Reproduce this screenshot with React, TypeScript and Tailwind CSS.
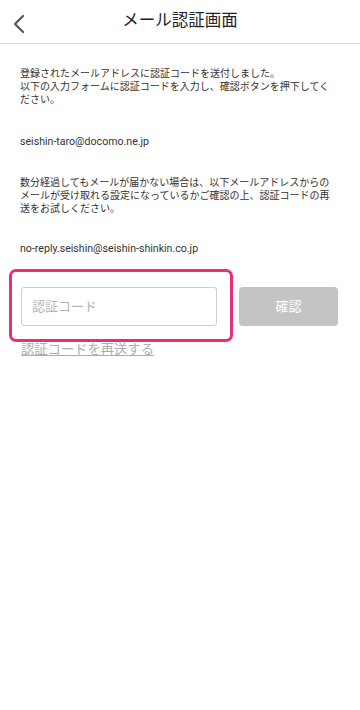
export default function App() {
  return (
    <div
      className="w-full min-h-screen bg-white text-[#333]"
      style={{ fontFamily: 'Roboto, "Noto Sans CJK JP", sans-serif' }}
    >
      <header className="relative h-[44px] flex items-center justify-center border-b border-[#dcdcdc]">
        <button type="button" className="absolute left-[8px] top-[10px] p-1">
          <svg width="14" height="20" viewBox="0 0 14 20" fill="none">
            <path d="M11 2 L3 10 L11 18" stroke="#555" strokeWidth="2.2" strokeLinecap="round" strokeLinejoin="round" />
          </svg>
        </button>
        <h1 className="text-[16.5px] text-[#222] leading-none">メール認証画面</h1>
      </header>

      <div className="pl-[20px] pr-[22px] pt-[23px] text-[10px] leading-[13px]">
        <p>
          登録されたメールアドレスに認証コードを送付しました。
          <br />
          以下の入力フォームに認証コードを入力し、確認ボタンを押下してください。
        </p>
        <p className="mt-[29px] text-[10.6px]">seishin-taro@docomo.ne.jp</p>
        <p className="mt-[28px]">
          数分経過してもメールが届かない場合は、以下メールアドレスからのメールが受け取れる設定になっているかご確認の上、認証コードの再送をお試しください。
        </p>
        <p className="mt-[27px] text-[10.6px]">no-reply.seishin@seishin-shinkin.co.jp</p>
      </div>

      <div className="pl-[21px] pr-[22px] mt-[32px]">
        <div className="flex items-center gap-[22px]">
          <div className="relative">
            <input
              type="text"
              placeholder="認証コード"
              className="w-[196px] h-[39px] rounded-[3px] border border-[#cfcfcf] px-[10px] text-[13px] placeholder:text-[#b5b5b5] outline-none"
            />
            <div className="absolute -left-[12px] -top-[18px] -right-[16px] -bottom-[16px] rounded-[7px] border-[3px] border-[#ee2a7b] pointer-events-none" />
          </div>
          <button
            type="button"
            className="w-[99px] h-[39px] rounded-[4px] bg-[#c4c4c4] text-white text-[13px]"
          >
            確認
          </button>
        </div>
        <a href="#" className="block mt-[16px] text-[13.3px] leading-[16px] text-[#adadad] underline">
          認証コードを再送する
        </a>
      </div>
    </div>
  );
}
